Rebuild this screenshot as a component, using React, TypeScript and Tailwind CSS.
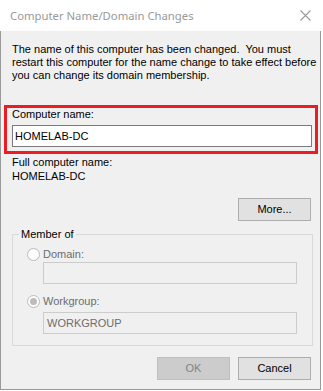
import React from "react";

const sans = { fontFamily: '"Liberation Sans", Arial, sans-serif' } as const;

function Radio({ checked }: { checked?: boolean }) {
  return (
    <span className="flex h-[13px] w-[13px] shrink-0 items-center justify-center rounded-full border border-[#bcbcbc] bg-[#fcfcfc]">
      {checked && <span className="h-[7px] w-[7px] rounded-full bg-[#bcbcbc]" />}
    </span>
  );
}

export default function App() {
  return (
    <div className="h-[391px] w-[323px] overflow-hidden bg-white text-[11px] leading-[13px] text-black" style={sans}>
      {/* Title bar */}
      <div className="flex h-[31px] w-[321px] items-center justify-between bg-white pl-[10px] pr-[10px]">
        <span className="text-[11.3px] text-[#999999]" style={{ fontFamily: '"Noto Sans", "Open Sans", sans-serif' }}>
          Computer Name/Domain Changes
        </span>
        <svg width="11" height="11" viewBox="0 0 11 11" className="mt-[-1px]">
          <path d="M0.5 0.5 L10.5 10.5 M10.5 0.5 L0.5 10.5" stroke="#9a9a9a" strokeWidth="1.1" fill="none" />
        </svg>
      </div>

      {/* Body */}
      <div className="flex h-[359px] w-[321px] flex-col border-x border-b border-[#9a9a9a] bg-[#f0f0f0] pt-[12px]">
        <p className="ml-[11px] whitespace-pre">
          {"The name of this computer has been changed.  You must\nrestart this computer for the name change to take effect before\nyou can change its domain membership."}
        </p>

        <div className="ml-[3px] mt-[23px] flex w-[314px] flex-col border-[3px] border-[#ec1c24] pb-[4px]">
          <span className="pl-[5px]">Computer name:</span>
          <div className="ml-[5px] mt-[4px] flex h-[22px] w-[300px] items-center border border-[#7a7a7a] bg-white pl-[2px]">
            HOMELAB-DC
          </div>
        </div>

        <span className="ml-[11px] mt-[2px]">Full computer name:</span>
        <span className="ml-[11px] mt-[1px]">HOMELAB-DC</span>

        <button className="mr-[9px] mt-[15px] flex h-[23px] w-[73px] items-center justify-center self-end border border-[#adadad] bg-[#e1e1e1]">
          More...
        </button>

        <fieldset className="ml-[11px] mt-[7px] w-[301px] border border-[#d9d9d9] px-0 pb-[11px]">
          <legend className="ml-[6px] px-[2px] leading-[13px]">Member of</legend>
          <div className="ml-[14px] mt-[7px] flex h-[13px] items-center gap-[3px] text-[#6d6d6d]">
            <Radio />
            <span>Domain:</span>
          </div>
          <div className="ml-[30px] mt-[1px] h-[22px] w-[254px] border border-[#cccccc] bg-[#f0f0f0]" />
          <div className="ml-[14px] mt-[11px] flex h-[13px] items-center gap-[3px] text-[#6d6d6d]">
            <Radio checked />
            <span>Workgroup:</span>
          </div>
          <div className="ml-[30px] mt-[4px] flex h-[22px] w-[254px] items-center border border-[#cccccc] bg-[#f0f0f0] pl-[3px] text-[#6d6d6d]">
            WORKGROUP
          </div>
        </fieldset>

        <div className="mr-[9px] mt-[11px] flex justify-end gap-[8px]">
          <button className="flex h-[23px] w-[73px] items-center justify-center border border-[#bfbfbf] bg-[#cccccc] text-[#838383]">
            OK
          </button>
          <button className="flex h-[23px] w-[73px] items-center justify-center border border-[#adadad] bg-[#e1e1e1]">
            Cancel
          </button>
        </div>
      </div>
    </div>
  );
}
